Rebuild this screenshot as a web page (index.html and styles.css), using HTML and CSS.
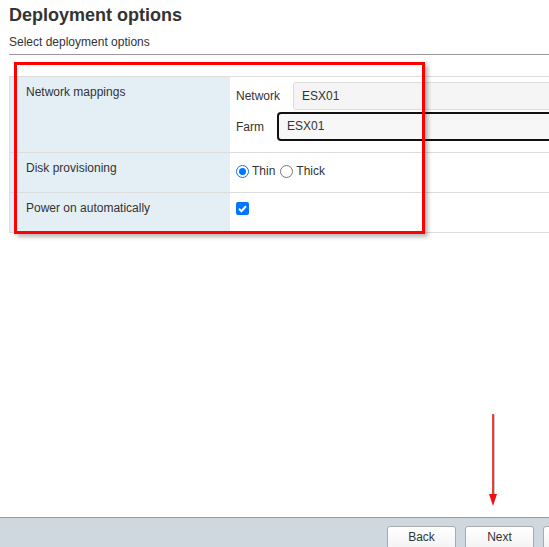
FILE: index.html
```html
<!DOCTYPE html>
<html>
<head>
<meta charset="utf-8">
<link rel="stylesheet" href="styles.css">
</head>
<body>
<div class="page">
  <div class="content">
    <h1 class="title">Deployment options</h1>
    <div class="subtitle">Select deployment options</div>
    <div class="rule"></div>
    <div class="grid">
      <div class="label">Network mappings</div>
      <div class="value mappings">
        <div class="map-line">
          <span class="map-label">Network</span>
          <div class="field">ESX01</div>
        </div>
        <div class="map-line">
          <span class="map-label">Farm</span>
          <div class="field focused">ESX01</div>
        </div>
      </div>
      <div class="label">Disk provisioning</div>
      <div class="value radios">
        <span class="radio checked"></span><span class="opt">Thin</span>
        <span class="radio"></span><span class="opt">Thick</span>
      </div>
      <div class="label last">Power on automatically</div>
      <div class="value last">
        <span class="checkbox">
          <svg width="13" height="13" viewBox="0 0 13 13"><path d="M3 6.8 L5.4 9.2 L10 4.2" fill="none" stroke="#fff" stroke-width="2"/></svg>
        </span>
      </div>
    </div>
    <div class="highlight"></div>
    <svg class="arrow" width="14" height="100" viewBox="0 0 14 100">
      <line x1="7" y1="2" x2="7" y2="85" stroke="#bbb" stroke-width="1.6"/>
      <line x1="6" y1="1" x2="6" y2="84" stroke="#ee1111" stroke-width="1.6"/>
      <path d="M2 81 L10 81 L6 93 Z" fill="#ee1111"/>
    </svg>
  </div>
  <div class="footer">
    <button class="btn">Back</button>
    <button class="btn">Next</button>
    <button class="btn" aria-label="Finish"></button>
  </div>
</div>
</body>
</html>
```
FILE: styles.css
```css
html, body {
  margin: 0;
  padding: 0;
  overflow: hidden;
  background: #fff;
}
body {
  font-family: "Liberation Sans", Arial, sans-serif;
  color: #333;
  font-size: 12px;
}
.page {
  display: flex;
  flex-direction: column;
  height: 100vh;
}
.content {
  flex: 1;
  position: relative;
  padding-left: 9px;
}
.title {
  margin: 0;
  padding-top: 5px;
  font-size: 18px;
  line-height: 21px;
  font-weight: bold;
  color: #333;
}
.subtitle {
  margin-top: 9px;
  font-size: 12px;
  line-height: 14px;
}
.rule {
  margin-top: 5px;
  height: 1px;
  background: #999;
  width: 700px;
}
.grid {
  margin-top: 21px;
  width: 760px;
  display: grid;
  grid-template-columns: 220px 1fr;
  border-top: 1px solid #ddd;
  border-left: 1px solid #ddd;
}
.label {
  background: #e4eef5;
  padding: 8px 0 0 16px;
  line-height: 14px;
  border-bottom: 1px solid #ddd;
}
.value {
  padding-left: 6px;
  border-bottom: 1px solid #ddd;
}
.mappings {
  padding-top: 5px;
  padding-bottom: 11px;
  display: flex;
  flex-direction: column;
  gap: 2px;
}
.map-line {
  display: flex;
  align-items: center;
}
.map-label {
  margin-right: 13px;
  line-height: 14px;
}
.field {
  flex: 1;
  height: 26px;
  line-height: 26px;
  padding-left: 8px;
  border: 1px solid #ddd;
  border-radius: 3px;
  background: #f5f5f5;
  color: #333;
}
.field.focused {
  height: 25px;
  line-height: 25px;
  border: 2px solid #111;
  border-radius: 4px;
  background: #f7f7f7;
}
.radios {
  display: flex;
  align-items: center;
  padding-top: 11px;
  padding-bottom: 14px;
  line-height: 14px;
}
.radio {
  width: 11px;
  height: 11px;
  border: 1px solid #777;
  border-radius: 50%;
  background: #fff;
  margin-right: 3px;
  position: relative;
}
.radio.checked {
  border-color: #0075ff;
}
.radio.checked::after {
  content: "";
  position: absolute;
  left: 2px;
  top: 2px;
  width: 7px;
  height: 7px;
  border-radius: 50%;
  background: #0075ff;
}
.opt {
  margin-right: 5px;
}
.value.last {
  padding-top: 9px;
  padding-bottom: 17px;
}
.checkbox {
  display: block;
  width: 13px;
  height: 13px;
  border-radius: 2px;
  background: #0075ff;
}
.checkbox svg {
  display: block;
}
.highlight {
  position: absolute;
  left: 14px;
  top: 62px;
  width: 405px;
  height: 166px;
  border: 3px solid #f00;
  box-shadow: 3px 3px 4px rgba(0, 0, 0, 0.28);
}
.arrow {
  position: absolute;
  left: 487px;
  top: 413px;
}
.footer {
  border-top: 1px solid #999;
  background: #d0d8df;
  display: flex;
  align-items: flex-start;
  gap: 9px;
  padding-left: 387px;
  padding-top: 8px;
  box-sizing: border-box;
  height: 30px;
}
.btn {
  flex: none;
  width: 69px;
  height: 26px;
  border: 1px solid #aaa;
  border-radius: 3px;
  background: linear-gradient(#fff, #f2f2f2);
  font-family: "Liberation Sans", Arial, sans-serif;
  font-size: 12px;
  color: #333;
  padding: 0 0 4px 0;
}
```
